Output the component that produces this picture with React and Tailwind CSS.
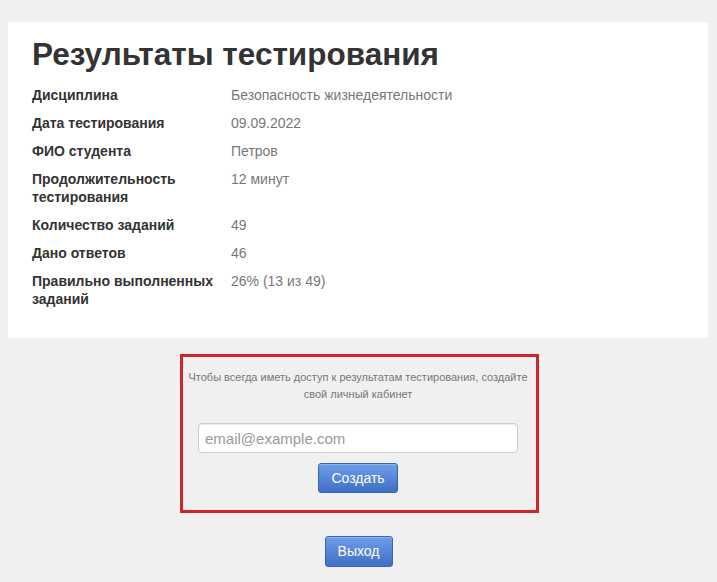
const rows = [
  ['Дисциплина', 'Безопасность жизнедеятельности'],
  ['Дата тестирования', '09.09.2022'],
  ['ФИО студента', 'Петров'],
  ['Продолжительность тестирования', '12 минут'],
  ['Количество заданий', '49'],
  ['Дано ответов', '46'],
  ['Правильно выполненных заданий', '26% (13 из 49)'],
];

const App = () => {
  return (
    <div className="min-h-[582px] bg-[#f0f0f0] pt-[22px] font-['Liberation_Sans',Arial,sans-serif]">
      {/* Results card */}
      <div className="ml-2 w-[700px] bg-white px-6 pt-[14px] pb-[30px] shadow-[0_0_1px_rgba(0,0,0,0.08)]">
        <h1 className="text-[31.5px] font-bold leading-[36px] text-[#333]">Результаты тестирования</h1>
        <div className="mt-[14px] flex flex-col gap-[10px]">
          {rows.map(([label, value]) => (
            <div key={label} className="flex text-[14px] leading-[18px]">
              <div className="w-[199px] shrink-0 pr-4 font-bold text-[#333]">{label}</div>
              <div className="text-[#777]">{value}</div>
            </div>
          ))}
        </div>
      </div>

      {/* Register box */}
      <div className="ml-[180px] mt-[16px] w-[359px] border-[3px] border-[#d0232a] pl-[2px] pr-[5px] pt-[12px] pb-[17px] text-center">
        <p className="text-[11px] leading-[17px] text-[#777]">
          Чтобы всегда иметь доступ к результатам тестирования, создайте свой личный кабинет
        </p>
        <input
          type="text"
          placeholder="email@example.com"
          className="mt-[20px] h-[30px] w-[320px] rounded-[4px] border border-[#ccc] bg-white px-[6px] text-[15px] text-[#555] placeholder:text-[#999] shadow-[inset_0_1px_1px_rgba(0,0,0,0.075)]"
        />
        <div className="mt-[10px] flex justify-center">
          <button className="h-[30px] w-[80px] rounded-[3px] border border-[#3b65b4] bg-gradient-to-b from-[#6e9eea] to-[#3f6fc6] text-[14px] text-white shadow-[inset_0_1px_0_rgba(255,255,255,0.25)]">
            Создать
          </button>
        </div>
      </div>

      {/* Exit */}
      <div className="mt-[23px] flex justify-center pb-4">
        <button className="h-[31px] w-[68px] rounded-[3px] border border-[#3b65b4] bg-gradient-to-b from-[#6e9eea] to-[#3f6fc6] text-[14px] text-white shadow-[inset_0_1px_0_rgba(255,255,255,0.25)]">
          Выход
        </button>
      </div>
    </div>
  );
};

export default App;
